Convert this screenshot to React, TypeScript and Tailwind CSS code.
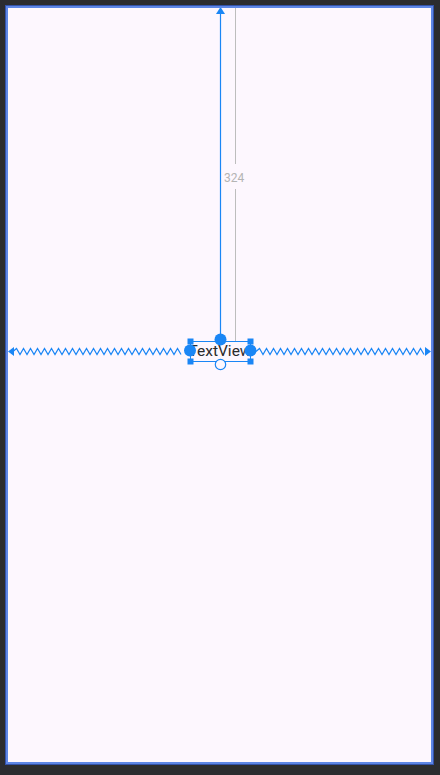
const BLUE = "#1a86f5";

const zig = (x1: number, x2: number, y: number) => {
  let d = `M${x1} ${y}`;
  let up = true;
  for (let x = x1 + 3.5; x <= x2; x += 3.5) {
    d += ` L${x} ${up ? y - 3 : y + 3}`;
    up = !up;
  }
  return d;
};

// constraint lines + selection handles, in page coordinates
const Blueprint = () => (
  <svg className="absolute inset-0 w-full h-full" viewBox="8 8 423 754">
    <line x1="220.5" y1="12" x2="220.5" y2="336" stroke={BLUE} strokeWidth="1.2" />
    <polygon points="220.5,7 216,14 225,14" fill={BLUE} />

    <line x1="235.5" y1="8" x2="235.5" y2="164" stroke="#bdbdbd" strokeWidth="1" />
    <line x1="235.5" y1="189" x2="235.5" y2="341" stroke="#bdbdbd" strokeWidth="1" />
    <line x1="228" y1="341.5" x2="243" y2="341.5" stroke="#bdbdbd" strokeWidth="1" />

    <path d={zig(13, 184, 351.5)} stroke={BLUE} strokeWidth="1.2" fill="none" />
    <polygon points="8,351.5 14,347 14,356" fill={BLUE} />
    <path d={zig(256, 426, 351.5)} stroke={BLUE} strokeWidth="1.2" fill="none" />
    <polygon points="431,351.5 425,347 425,356" fill={BLUE} />

    <rect x="190.5" y="341.5" width="60" height="20" stroke={BLUE} strokeWidth="1" fill="none" />
    <rect x="187.5" y="338.5" width="6" height="6" fill={BLUE} />
    <rect x="247.5" y="338.5" width="6" height="6" fill={BLUE} />
    <rect x="187.5" y="358.5" width="6" height="6" fill={BLUE} />
    <rect x="247.5" y="358.5" width="6" height="6" fill={BLUE} />
    <circle cx="220.5" cy="339.5" r="6" fill={BLUE} />
    <circle cx="190" cy="350.5" r="6" fill={BLUE} />
    <circle cx="250.5" cy="350.5" r="6" fill={BLUE} />
    <circle cx="220.5" cy="364.5" r="5.2" fill="#fdf7fe" stroke={BLUE} strokeWidth="1.2" />
  </svg>
);

export default function App() {
  return (
    <div className="w-[440px] h-[775px] bg-[#2b2c2f] p-[5px] pb-[10px] pr-[6px]">
      <div className="w-full h-full border border-[#3352a8]">
        <div className="w-full h-full border-2 border-[#5d86e6]">
          <div className="relative w-full h-full bg-[#fdf7fe] overflow-hidden" style={{ fontFamily: "Roboto, sans-serif" }}>
            <div className="absolute left-[182px] top-[334px] w-[60px] h-[20px] overflow-hidden flex justify-center items-center">
              <span className="whitespace-nowrap text-[15.5px] text-[#2a2a2a] leading-none">TextView</span>
            </div>
            <div className="absolute left-[216px] top-[160px] text-[12px] leading-[20px] text-[#b4b4b4]">324</div>
            <Blueprint />
          </div>
        </div>
      </div>
    </div>
  );
}
